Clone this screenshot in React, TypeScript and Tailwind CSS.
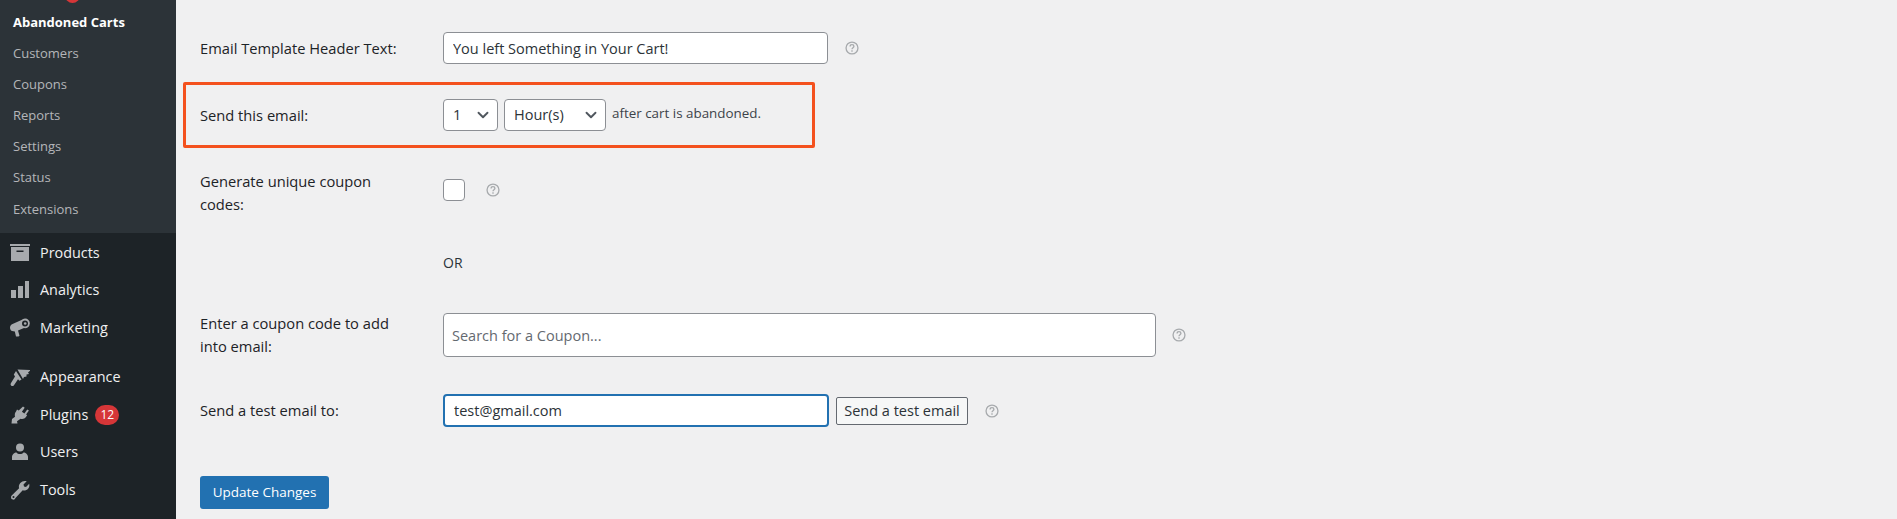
import React from 'react';
import { ChevronDown } from 'lucide-react';

const font = "font-['Open_Sans','Noto_Sans',sans-serif]";

const ProductsIcon = () => (
    <svg viewBox="0 0 20 20" className="w-5 h-5" fill="#a7aaad">
        <path d="M0 1h20v2H0z" />
        <path fillRule="evenodd" d="M1 4h18v14H1zM6.500 7.500V9h7V7.500z" />
    </svg>
);
const AnalyticsIcon = () => (
    <svg viewBox="0 0 20 20" className="w-5 h-5" fill="#a7aaad">
        <path d="M1 10h5v8H1zM8 6h5v12H8zM15 1h4v17h-4z" />
    </svg>
);
const MarketingIcon = () => (
    <svg viewBox="0 0 20 20" className="w-5 h-5" fill="#a7aaad">
        <path fillRule="evenodd" d="M15 0.500a4.800 4.800 0 0 1 4.800 5 4.800 4.800 0 0 1-5.800 4.600L8 12.500l1.500 5.300-1 .7H6l-1.200-5L2 13C.5 12.500 0 10.500 0 9.500c0-1.500 1-2.800 2-3.300l9.500-4.200A4.800 4.800 0 0 1 15 .5zm0 2a3 3 0 0 0-3 3 3 3 0 0 0 3 3 3 3 0 0 0 3-3 3 3 0 0 0-3-3z" />
        <circle cx="15.200" cy="5.500" r="1.300" />
    </svg>
);
const AppearanceIcon = () => (
    <svg viewBox="0 0 20 20" className="w-5 h-5" fill="#a7aaad">
        <path d="M7.500 2.500L21 3l-3 2.500 1 1.500-2.500.5v2l-2.500.5-1 2z" />
        <path d="M6 4l5.500 8.500-2 1.300-1.500-1.500-4.200 6.200q-1.500 1-2.800 0-1-1.200 0-2.500L5 9.500 3.800 7.500z" />
    </svg>
);
const PluginsIcon = () => (
    <svg viewBox="0 0 20 20" className="w-5 h-5" fill="#a7aaad">
        <path d="M13 1.500l1.700 1.200-2.800 4 2.500 1.700 2.800-4 1.700 1.200-2.800 4 1 .7-1 1.500c-1.300 2-3.500 2.700-5.500 2l-3.600 2.500.5 2.200H1.500l.5-4.500 3-2.200c-.5-2-.2-4 1.200-5.500L7 4.500l1.700 1.100z" />
    </svg>
);
const UsersIcon = () => (
    <svg viewBox="0 0 20 20" className="w-5 h-5" fill="#a7aaad">
        <circle cx="10" cy="5.500" r="4" />
        <path d="M2 18v-3c0-2.500 2.500-4.500 4.500-4.500.8 1 2 1.500 3.500 1.500s2.700-.5 3.500-1.500c2 0 4.500 2 4.500 4.500v3z" />
    </svg>
);
const ToolsIcon = () => (
    <svg viewBox="0 0 20 20" className="w-5 h-5" fill="#a7aaad">
        <path fillRule="evenodd" d="M15 1c.6 0 1.200.1 1.700.3L13.500 4.500l.5 2 2 .5 3.200-3.200c.5 2 0 4-1.400 5.300-1.400 1.400-3.400 1.800-5.100 1.200L5.500 18A2.300 2.300 0 0 1 1 17.200c0-.6.2-1.200.7-1.700l7.400-7.200C8.500 6.500 9 4.500 10.300 3A6 6 0 0 1 15 1zM3.500 16a1 1 0 1 0 0 2 1 1 0 0 0 0-2z" />
    </svg>
);

const HelpIcon = () => (
    <svg viewBox="0 0 16 16" className="w-[14px] h-[14px]" fill="none" stroke="#a7aaad" strokeWidth="1.500">
        <circle cx="8" cy="8" r="6.800" />
        <path d="M5.800 6.300c0-1.300 1-2.100 2.200-2.100s2.200.8 2.200 1.900c0 1.500-2.200 1.600-2.200 3.300" />
        <path d="M8 10.600v1.600" />
    </svg>
);

const subItems = ['Customers', 'Coupons', 'Reports', 'Settings', 'Status', 'Extensions'];

const Sidebar = () => (
    <aside className="relative w-[176px] shrink-0 bg-[#1d2327] h-full">
        {/* badge of the item scrolled off above */}
        <span className="absolute left-[65px] top-[-12px] w-[15px] h-[15px] rounded-full bg-[#d63638]" />
        <div className="bg-[#2c3338] h-[233px] pt-[9px] pl-[13px]">
            <div className="h-[26px] leading-[26px] text-[13px] font-bold text-white">Abandoned Carts</div>
            {subItems.map(s => (
                <div key={s} className="mt-[5.100px] h-[26px] leading-[26px] text-[13px] text-[#c3c4c7] opacity-90">{s}</div>
            ))}
        </div>
        <div className="pl-[10px] pt-[1px] text-[14.400px] text-[#f0f0f1]">
            <div className="h-[37.500px] flex items-center gap-[10px]"><ProductsIcon />Products</div>
            <div className="h-[37.500px] flex items-center gap-[10px]"><AnalyticsIcon />Analytics</div>
            <div className="h-[37.500px] flex items-center gap-[10px]"><MarketingIcon />Marketing</div>
            <div className="h-[12px]" />
            <div className="h-[37.500px] flex items-center gap-[10px]"><AppearanceIcon />Appearance</div>
            <div className="h-[37.500px] flex items-center gap-[10px]">
                <PluginsIcon />Plugins
                <span className="-ml-[3px] h-[20px] w-[24px] rounded-full bg-[#d63638] text-white text-[12px] leading-[20px] text-center">12</span>
            </div>
            <div className="h-[37.500px] flex items-center gap-[10px]"><UsersIcon />Users</div>
            <div className="h-[37.500px] flex items-center gap-[10px]"><ToolsIcon />Tools</div>
        </div>
    </aside>
);

const Label = ({ children }: { children: React.ReactNode }) => (
    <div className="w-[260px] shrink-0 pl-[17px] pr-[40px] text-[14.700px] leading-[23px] font-medium text-[#1d2327]">{children}</div>
);

const Select = ({ value, width }: { value: string; width: string }) => (
    <div className={`relative h-[32px] ${width} bg-white border border-[#8c8f94] rounded-[4px]`}>
        <select defaultValue={value} className="appearance-none w-full h-full pl-[9px] pb-[1px] bg-transparent text-[14.500px] text-[#2c3338] outline-none">
            <option>{value}</option>
        </select>
        <ChevronDown size={18} strokeWidth={2.500} className="absolute right-[5px] top-[6px] text-[#50575e] pointer-events-none" />
    </div>
);

export default function App() {
    return (
        <div className={`${font} w-[1897px] h-[519px] overflow-hidden flex bg-[#f0f0f1] text-[#2c3338]`}>
            <Sidebar />
            <main className="flex-1 flex flex-col pl-[7px]">
                {/* Header text */}
                <div className="flex items-center mt-[32px] h-[32px]">
                    <Label>Email Template Header Text:</Label>
                    <input defaultValue="You left Something in Your Cart!" className="w-[385px] h-full pl-[9px] pr-[9px] bg-white border border-[#8c8f94] rounded-[4px] text-[14.500px] outline-none" />
                    <div className="ml-[17px]"><HelpIcon /></div>
                </div>

                {/* Delay, boxed in red */}
                <div className="flex items-center mt-[18px] h-[66px] w-[632px] border-[3px] border-[#f4511e] rounded-[2px] -mb-[1px]">
                    <div className="w-[257px] shrink-0 pl-[14px] text-[14.700px] font-medium text-[#1d2327]">Send this email:</div>
                    <div className="flex items-center gap-[6px]">
                        <Select value="1" width="w-[55px]" />
                        <Select value="Hour(s)" width="w-[102px]" />
                        <span className="mb-[3px] text-[13.400px] text-[#3c434a]">after cart is abandoned.</span>
                    </div>
                </div>

                {/* Coupon toggle */}
                <div className="flex items-start mt-[23px]">
                    <Label>Generate unique coupon codes:</Label>
                    <div className="w-[22px] h-[22px] mt-[9px] bg-white border border-[#8c8f94] rounded-[4px]" />
                    <div className="ml-[21px] mt-[13px]"><HelpIcon /></div>
                </div>

                <div className="mt-[37px] pl-[260px] text-[14px] leading-[20px] font-medium">OR</div>

                {/* Coupon search */}
                <div className="flex items-center mt-[40px] h-[44px]">
                    <Label>Enter a coupon code to add into email:</Label>
                    <input placeholder="Search for a Coupon..." className="w-[713px] h-full px-[8px] bg-white border border-[#8c8f94] rounded-[4px] text-[14.500px] placeholder:text-[#646970] outline-none" />
                    <div className="ml-[16px]"><HelpIcon /></div>
                </div>

                {/* Test email */}
                <div className="flex items-center mt-[37px] h-[33px]">
                    <Label>Send a test email to:</Label>
                    <input defaultValue="test@gmail.com" className="w-[386px] h-full px-[9px] bg-white border-2 border-[#2271b1] rounded-[4px] text-[14.500px] outline-none" />
                    <button className="ml-[7px] h-[28px] w-[132px] bg-[#f6f7f7] border border-[#646970] rounded-[2px] text-[14.500px] whitespace-nowrap text-[#2c3338]">Send a test email</button>
                    <div className="ml-[17px]"><HelpIcon /></div>
                </div>

                <button className="mt-[49px] ml-[17px] w-[129px] h-[33px] bg-[#2271b1] rounded-[3px] text-[13.500px] text-white">Update Changes</button>
            </main>
        </div>
    );
}
